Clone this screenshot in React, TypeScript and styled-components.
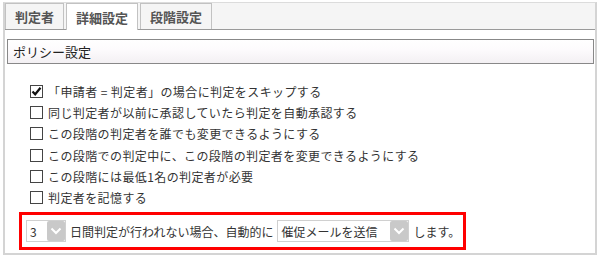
import styled, { createGlobalStyle } from "styled-components";

const GlobalStyle = createGlobalStyle`
  body {
    margin: 0;
    background: #fff;
    font-family: "Noto Sans CJK JP", "Noto Sans", sans-serif;
    color: #333;
  }
`;

const tabs = ["判定者", "詳細設定", "段階設定"];

const options = [
  { label: "「申請者 = 判定者」の場合に判定をスキップする", checked: true },
  { label: "同じ判定者が以前に承認していたら判定を自動承認する", checked: false },
  { label: "この段階の判定者を誰でも変更できるようにする", checked: false },
  { label: "この段階での判定中に、この段階の判定者を変更できるようにする", checked: false },
  { label: "この段階には最低1名の判定者が必要", checked: false },
  { label: "判定者を記憶する", checked: false },
];

const Chevron = () => (
  <svg width="12" height="8" viewBox="0 0 12 8">
    <path d="M1.5 1.5 L6 6 L10.5 1.5" fill="none" stroke="#fff" strokeWidth="2" />
  </svg>
);

const CheckMark = () => (
  <svg width="11" height="11" viewBox="0 0 11 11">
    <path d="M1.5 5.5 L4.2 8.3 L9.5 1.8" fill="none" stroke="#111" strokeWidth="2.2" />
  </svg>
);

const App = () => {
  return (
    <Page>
      <GlobalStyle />
      <Panel>
        <TabBar>
          {tabs.map((t, i) => (
            <Tab key={t} $active={i === 1}>
              {t}
            </Tab>
          ))}
        </TabBar>
        <Body>
          <SectionHeader>ポリシー設定</SectionHeader>
          <OptionList>
            {options.map((o) => (
              <OptionRow key={o.label}>
                <Box>{o.checked && <CheckMark />}</Box>
                <span>{o.label.replace(" = ", "\u00a0=\u00a0")}</span>
              </OptionRow>
            ))}
          </OptionList>
          <Highlight>
            <Select $width={40}>
              <span>3</span>
              <ArrowBtn>
                <Chevron />
              </ArrowBtn>
            </Select>
            <Text>日間判定が行われない場合、自動的に</Text>
            <Select $width={132}>
              <span>催促メールを送信</span>
              <ArrowBtn>
                <Chevron />
              </ArrowBtn>
            </Select>
            <Text>します。</Text>
          </Highlight>
        </Body>
      </Panel>
    </Page>
  );
};

const Page = styled.div`
  padding: 2px 4px 0 3px;
`;

const Panel = styled.div`
  width: 594px;
  box-sizing: border-box;
  border-style: solid;
  border-width: 1px 2px 2px 2px;
  border-color: #dcdcdc #d4d4d4 #d4d4d4 #d4d4d4;
`;

const TabBar = styled.div`
  display: flex;
  align-items: flex-end;
  gap: 2px;
  height: 27px;
  box-sizing: border-box;
  padding: 2px 0 0 0;
  background: #f5f5f5;
  border-bottom: 1px solid #9a9a9a;
`;

const Tab = styled.div<{ $active: boolean }>`
  box-sizing: border-box;
  padding: 0 9px;
  display: flex;
  align-items: center;
  font-size: 13px;
  font-weight: bold;
  color: #555;
  border: 1px solid #c2c2c2;
  border-bottom: none;
  background: ${(p) => (p.$active ? "#fff" : "#f5f5f5")};
  margin-bottom: ${(p) => (p.$active ? "-1px" : "0")};
  height: ${(p) => (p.$active ? "27px" : "26px")};
`;

const Body = styled.div`
  padding: 9px 1px 3px 2px;
`;

const SectionHeader = styled.div`
  height: 25px;
  box-sizing: border-box;
  border: 1px solid #888;
  background: linear-gradient(#fff 0%, #fdfbfd 40%, #f3f0f3 100%);
  padding-left: 5px;
  font-size: 13px;
  line-height: 23px;
  color: #222;
`;

const OptionList = styled.div`
  margin-top: 17px;
  padding-left: 22px;
  display: flex;
  flex-direction: column;
`;

const OptionRow = styled.div`
  display: flex;
  align-items: center;
  gap: 5px;
  height: 21.2px;
  font-size: 12px;
  letter-spacing: 0.4px;
  color: #333;
`;

const Box = styled.span`
  width: 13px;
  height: 13px;
  box-sizing: border-box;
  border: 1px solid #444;
  margin-left: 1px;
  display: flex;
  align-items: center;
  justify-content: center;
  background: #fff;
`;

const Highlight = styled.div`
  margin: 4px 0 0 12px;
  width: 447px;
  height: 38px;
  box-sizing: border-box;
  border: 3px solid #f00;
  display: flex;
  align-items: center;
  padding-left: 4px;
  gap: 4px;
  white-space: nowrap;
`;

const Select = styled.div<{ $width: number }>`
  flex-shrink: 0;
  width: ${(p) => p.$width}px;
  height: 22px;
  box-sizing: border-box;
  border: 1px solid #d0d0d0;
  background: #fff;
  display: flex;
  align-items: center;
  justify-content: space-between;
  padding-left: 3px;
  font-size: 12px;
  color: #333;
`;

const ArrowBtn = styled.span`
  width: 18px;
  height: 20px;
  background: #c9c9c9;
  border-radius: 2px;
  display: flex;
  align-items: center;
  justify-content: center;
`;

const Text = styled.span`
  flex-shrink: 0;
  font-size: 12px;
  color: #333;
`;

export default App;
